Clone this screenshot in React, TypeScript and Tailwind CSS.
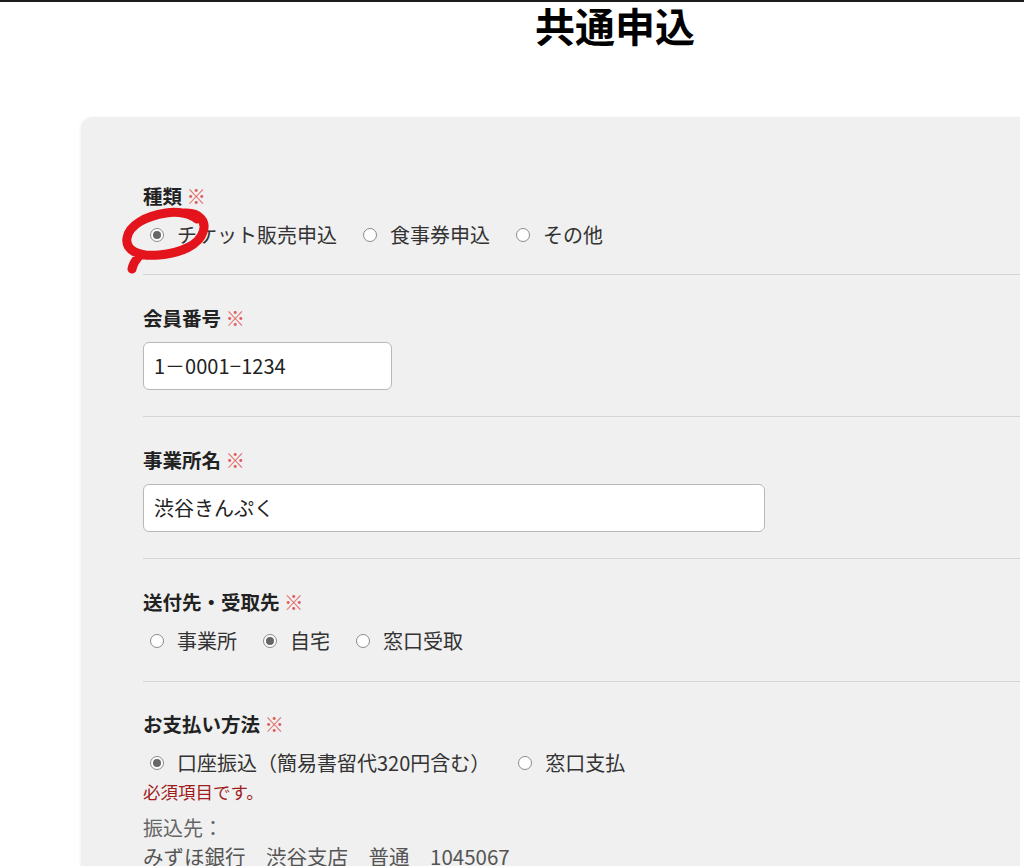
import React from 'react';

const jp = { fontFamily: '"Noto Sans CJK JP", "Noto Sans", sans-serif' };

type Opt = { label: string; checked?: boolean };

const Radio: React.FC<Opt> = ({ label, checked }) => (
  <label className="flex items-center gap-[13px]">
    <span className="flex h-[14px] w-[14px] items-center justify-center rounded-full border border-[#8a8a8a] bg-white">
      {checked && <span className="h-[8px] w-[8px] rounded-full bg-[#666]" />}
    </span>
    <span className="text-[20px] leading-[30px] text-[#333]">{label}</span>
  </label>
);

const RadioRow: React.FC<{ options: Opt[] }> = ({ options }) => (
  <div className="mt-[10px] flex items-center gap-[26px] pl-[7px]">
    {options.map((o) => (
      <Radio key={o.label} {...o} />
    ))}
  </div>
);

const Label: React.FC<{ text: string }> = ({ text }) => (
  <div className="text-[19.5px] font-bold leading-[28px] text-[#222]">
    {text} <span className="font-normal text-[#e05a5a]">※</span>
  </div>
);

const Divider = () => <div className="h-px bg-[#d4d4d4]" />;

const App: React.FC = () => {
  return (
    <div className="relative h-[866px] w-[1024px] overflow-hidden border-t-2 border-[#1c1c1c] bg-white" style={jp}>
      <h1 className="mt-[3px] pl-[206px] text-center text-[40px] font-bold leading-[40px] text-black">共通申込</h1>

      <div className="ml-[81px] mr-[4px] mt-[72px] h-[760px] rounded-tl-[12px] bg-[#f0f0f0] pl-[62px] shadow-[-1px_0_3px_rgba(0,0,0,0.05)]">
        {/* 種類 */}
        <div className="pb-[24px] pt-[65px]">
          <Label text="種類" />
          <RadioRow options={[{ label: 'チケット販売申込', checked: true }, { label: '食事券申込' }, { label: 'その他' }]} />
        </div>
        <Divider />

        {/* 会員番号 */}
        <div className="pb-[26px] pt-[29px]">
          <Label text="会員番号" />
          <div className="mt-[10px] flex h-[48px] w-[249px] items-center rounded-[6px] border-[1.5px] border-[#b8b8b8] bg-white px-[10px] text-[20px] text-[#222]">
            1－0001<span style={{ fontFamily: '"Liberation Sans", sans-serif' }}>−</span>1234
          </div>
        </div>
        <Divider />

        {/* 事業所名 */}
        <div className="pb-[26px] pt-[29px]">
          <Label text="事業所名" />
          <div className="mt-[10px] flex h-[48px] w-[622px] items-center rounded-[6px] border-[1.5px] border-[#b8b8b8] bg-white px-[10px] text-[20px] text-[#222]">
            渋谷きんぷく
          </div>
        </div>
        <Divider />

        {/* 送付先・受取先 */}
        <div className="pb-[25px] pt-[29px]">
          <Label text="送付先・受取先" />
          <RadioRow options={[{ label: '事業所' }, { label: '自宅', checked: true }, { label: '窓口受取' }]} />
        </div>
        <Divider />

        {/* お支払い方法 */}
        <div className="pt-[28px]">
          <Label text="お支払い方法" />
          <div className="mt-[10px] flex items-center gap-[28px] pl-[7px]">
            <Radio label="口座振込（簡易書留代320円含む）" checked />
            <Radio label="窓口支払" />
          </div>
          <div className="mt-[2px] text-[17.5px] leading-[24px] text-[#9e1c1c]">必須項目です。</div>
          <div className="mt-[10px] text-[20px] leading-[28px] text-[#666]">振込先：</div>
          <div className="text-[20.5px] leading-[28px] text-[#555]">みずほ銀行　渋谷支店　普通　1045067</div>
        </div>
      </div>

      {/* hand-drawn annotation */}
      <svg className="pointer-events-none absolute left-0 top-0" width="1024" height="866" viewBox="0 0 1024 866">
        <path
          d="M184 211 C199 210 207 219 203 230 C199 243 181 251 159 253 C138 255 125 248 127 236 C129 223 146 214 166 211 C179 209 191 212 197 217 M141 252 C136 257 133 262 132 267"
          fill="none"
          stroke="#e3141c"
          strokeWidth="9"
          strokeLinecap="round"
          strokeLinejoin="round"
        />
      </svg>
    </div>
  );
};

export default App;
